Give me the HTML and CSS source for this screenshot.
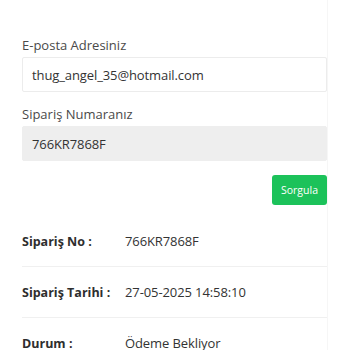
FILE: index.html
```html
<!DOCTYPE html>
<html lang="tr">
<head>
<meta charset="utf-8">
<link rel="stylesheet" href="styles.css">
</head>
<body>
<div class="page">
  <form class="form">
    <label class="label">E-posta Adresiniz</label>
    <div class="input">thug_angel_35@hotmail.com</div>
    <label class="label">Sipariş Numaranız</label>
    <div class="input filled">766KR7868F</div>
    <div class="actions"><button type="button" class="btn">Sorgula</button></div>
  </form>
  <div class="details">
    <div class="row"><span class="key">Sipariş No :</span><span class="val">766KR7868F</span></div>
    <div class="row"><span class="key">Sipariş Tarihi :</span><span class="val">27-05-2025 14:58:10</span></div>
    <div class="row"><span class="key">Durum :</span><span class="val">Ödeme Bekliyor</span></div>
  </div>
</div>
</body>
</html>
```
FILE: styles.css
```css
html, body { margin: 0; padding: 0; background: #fff; }
body { font-family: "Open Sans", sans-serif; color: #333; }
.page { width: 305px; margin-left: 22px; padding-top: 37px; border-right: 1px solid #f6f6f6; }
.form { display: flex; flex-direction: column; }
.label { font-size: 13px; color: #4a4a4a; line-height: 16px; margin-bottom: 4px; }
.input { height: 33px; border: 1px solid #ececec; border-radius: 2px; padding-left: 9px; display: flex; align-items: center; font-size: 13px; letter-spacing: -0.1px; color: #333; margin-bottom: 14px; }
.input.filled { background: #eeeeee; border-color: #eeeeee; margin-bottom: 14px; }
.actions { display: flex; justify-content: flex-end; }
.btn { width: 55px; height: 30px; border: 0; border-radius: 3px; background: #1cc25a; color: #fff; font-family: inherit; font-size: 10.5px; padding: 0; }
.details { margin-top: 11px; }
.row { display: flex; align-items: center; height: 50px; border-bottom: 1px solid #f0f0f0; font-size: 13px; }
.row:last-child { border-bottom: 0; }
.key { width: 103px; font-weight: 700; font-size: 12.5px; color: #2e2e2e; }
.val { color: #333; letter-spacing: -0.1px; }
```
